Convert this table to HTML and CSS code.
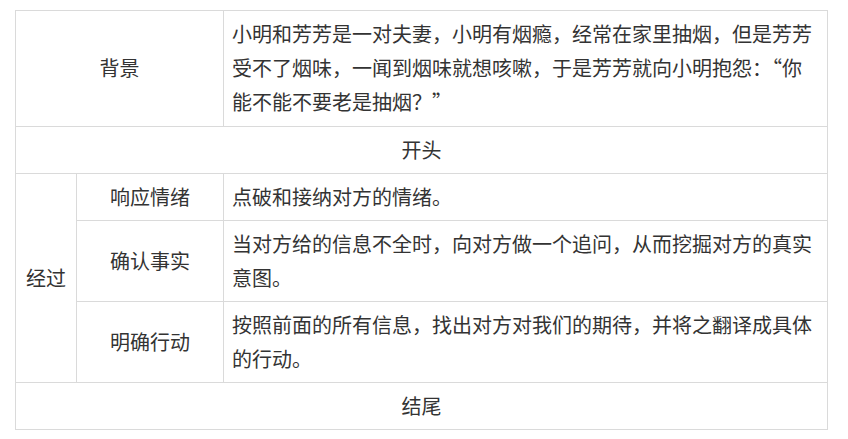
FILE: index.html
```html
<!DOCTYPE html>
<html lang="zh-CN">
<head>
<meta charset="utf-8" />
<title>沟通结构</title>
<link rel="stylesheet" href="styles.css">
</head>
<body>
<div class="wrap">
	<table class="talk">
		<colgroup>
			<col class="c1">
			<col class="c2">
			<col class="c3">
		</colgroup>
		<tr class="r3">
			<td colspan="2" class="mid">背景</td>
			<td>小明和芳芳是一对夫妻，小明有烟瘾，经常在家里抽烟，但是芳芳受不了烟味，一闻到烟味就想咳嗽，于是芳芳就向小明抱怨：“你能不能不要老是抽烟？”</td>
		</tr>
		<tr>
			<td colspan="3" class="mid">开头</td>
		</tr>
		<tr>
			<td rowspan="3" class="mid">经过</td>
			<td class="mid">响应情绪</td>
			<td>点破和接纳对方的情绪。</td>
		</tr>
		<tr>
			<td class="mid">确认事实</td>
			<td>当对方给的信息不全时，向对方做一个追问，从而挖掘对方的真实意图。</td>
		</tr>
		<tr>
			<td class="mid">明确行动</td>
			<td>按照前面的所有信息，找出对方对我们的期待，并将之翻译成具体的行动。</td>
		</tr>
		<tr>
			<td colspan="3" class="mid">结尾</td>
		</tr>
	</table>
</div>
</body>
</html>
```

FILE: styles.css
```css
*{margin:0;padding:0;}
body{background:#fff;font-family:"Noto Sans CJK SC","Microsoft YaHei",sans-serif;color:#333;}
.wrap{padding:10px 0 0 15px;}
.talk{border-collapse:collapse;table-layout:fixed;width:812px;font-size:20px;line-height:34px;}
.talk .c1{width:61px;}
.talk .c2{width:147px;}
.talk .c3{width:604px;}
.talk td{border:1px solid #dadada;padding:6px 8px;vertical-align:middle;text-align:left;}
.talk td.mid{text-align:center;padding-left:0;padding-right:0;}
.talk .r3 td{padding-bottom:7px;}
```
